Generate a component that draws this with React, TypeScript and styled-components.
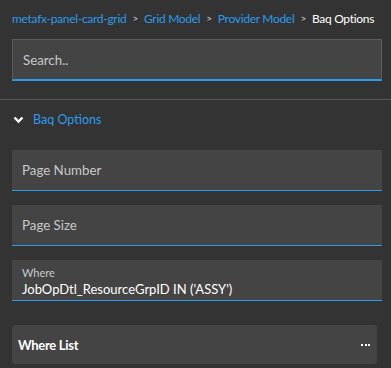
import styled, { createGlobalStyle } from "styled-components";

const Global = createGlobalStyle`
  html, body {
    margin: 0;
    padding: 0;
    background: #333333;
    font-family: Lato, "Liberation Sans", sans-serif;
  }
`;

const Page = styled.div`
  width: 391px;
  height: 368px;
  overflow: hidden;
  background: #333333;
`;

const Top = styled.div`
  padding: 9px 9px 18px 12px;
  border-bottom: 1px solid #555555;
`;

const Crumbs = styled.div`
  display: flex;
  align-items: center;
  height: 18px;
  font-size: 12px;
  letter-spacing: -0.3px;
  white-space: nowrap;
`;

const Crumb = styled.a<{ current?: boolean }>`
  color: ${p => p.current ? '#ffffff' : '#2a9cec'};
  text-decoration: none;
`;

const Sep = styled.span`
  color: #d8d8d8;
  font-size: 10px;
  margin: 0 6px;
`;

const Search = styled.div`
  margin-top: 12px;
  height: 39px;
  display: flex;
  align-items: center;
  padding-left: 10px;
  background: #444444;
  border: 1px solid #5c5c5c;
  border-bottom: 2px solid #2a9cec;
  color: #c8c8c8;
  font-size: 13.3px;
`;

const Body = styled.div`
  padding: 9px 9px 0 12px;
`;

const Section = styled.div`
  display: flex;
  align-items: center;
  gap: 9px;
  height: 21px;
  padding-left: 1px;
  color: #2a9cec;
  font-size: 12.5px;
  margin-bottom: 20px;
`;

const Field = styled.div<{ filled?: boolean }>`
  height: 41px;
  box-sizing: border-box;
  background: #444444;
  border-bottom: 1px solid #2a9cec;
  padding: 0 10px;
  display: flex;
  flex-direction: column;
  justify-content: ${p => p.filled ? 'flex-start' : 'center'};
  margin-bottom: 14px;
`;

const Placeholder = styled.span`
  color: #c8c8c8;
  font-size: 13.3px;
`;

const Label = styled.span`
  color: #c8c8c8;
  font-size: 11px;
  line-height: 14px;
  margin-top: 6px;
`;

const Value = styled.span`
  color: #ffffff;
  font-size: 13px;
  line-height: 18px;
`;

const Card = styled.div`
  margin-top: 24px;
  margin-right: 5px;
  height: 39px;
  border-radius: 3px;
  background: #444444;
  display: flex;
  align-items: center;
  justify-content: space-between;
  padding: 0 7px 0 6px;
  color: #ffffff;
  font-size: 13px;
  font-weight: 700;
  letter-spacing: -0.3px;
`;

const Dots = styled.span`
  display: flex;
  gap: 1.5px;
  i {
    width: 2px;
    height: 2px;
    background: #ffffff;
  }
`;

export default function App() {
  return (
    <Page>
      <Global />
      <Top>
        <Crumbs>
          <Crumb href="#">metafx-panel-card-grid</Crumb>
          <Sep>&gt;</Sep>
          <Crumb href="#">Grid Model</Crumb>
          <Sep>&gt;</Sep>
          <Crumb href="#">Provider Model</Crumb>
          <Sep>&gt;</Sep>
          <Crumb current>Baq Options</Crumb>
        </Crumbs>
        <Search>Search..</Search>
      </Top>
      <Body>
        <Section>
          <svg width="11" height="9" viewBox="0 0 11 9">
            <polyline points="1.5,2.5 5.5,6.5 9.5,2.5" fill="none" stroke="#ffffff" strokeWidth="2.4" />
          </svg>
          Baq Options
        </Section>
        <Field><Placeholder>Page Number</Placeholder></Field>
        <Field><Placeholder>Page Size</Placeholder></Field>
        <Field filled>
          <Label>Where</Label>
          <Value>JobOpDtl_ResourceGrpID IN ('ASSY')</Value>
        </Field>
        <Card>
          Where List
          <Dots><i /><i /><i /></Dots>
        </Card>
      </Body>
    </Page>
  );
}
